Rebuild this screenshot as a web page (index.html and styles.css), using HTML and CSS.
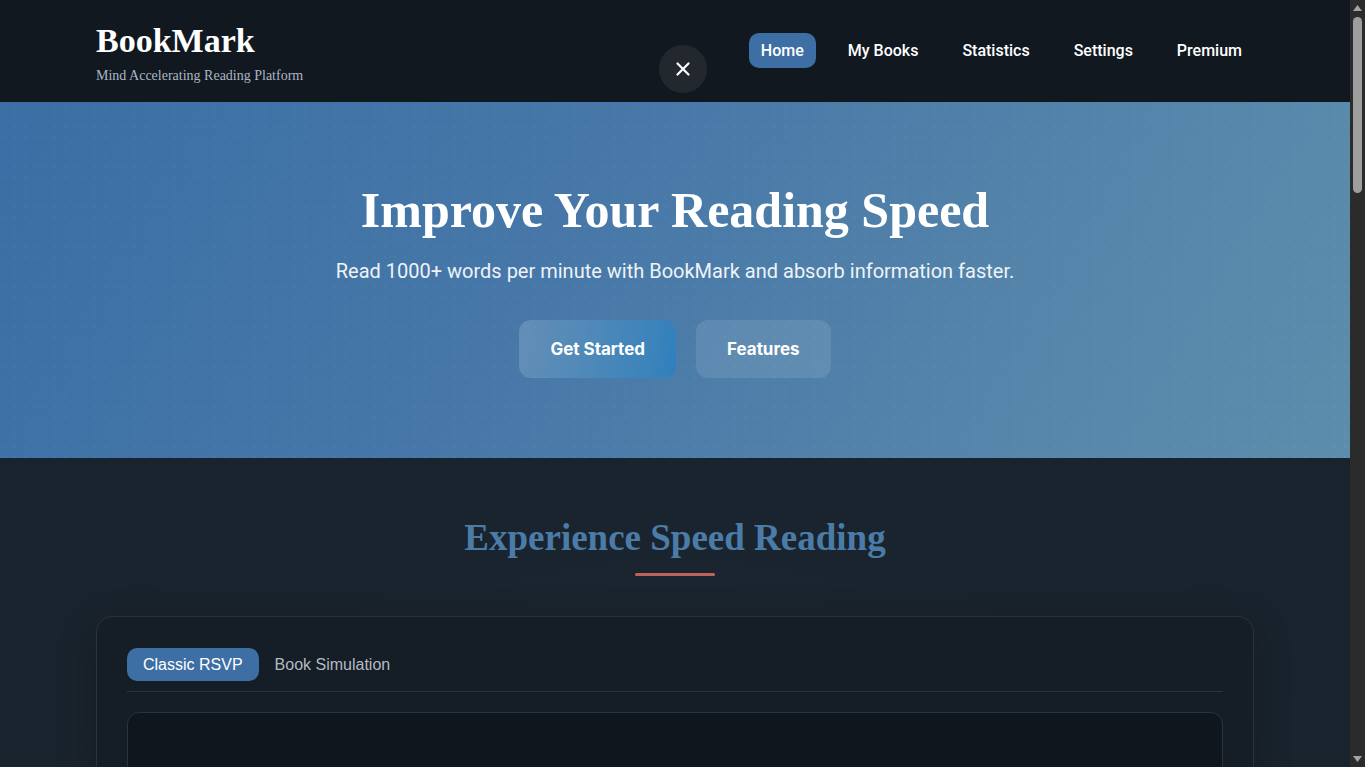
FILE: index.html
```html
<!DOCTYPE html>
<html lang="en">
<head>
<meta charset="utf-8">
<title>BookMark</title>
<link rel="stylesheet" href="styles.css">
</head>
<body>
<div class="page">
<header class="site-header">
  <div class="container header-inner">
    <div class="brand">
      <div class="logo">BookMark</div>
      <div class="tagline">Mind Accelerating Reading Platform</div>
    </div>
    <nav class="nav">
      <a class="nav-link active" href="#">Home</a>
      <a class="nav-link" href="#">My Books</a>
      <a class="nav-link" href="#">Statistics</a>
      <a class="nav-link" href="#">Settings</a>
      <a class="nav-link" href="#">Premium</a>
    </nav>
  </div>
  <button class="close-btn" aria-label="Close">
    <svg width="18" height="18" viewBox="0 0 18 18"><path d="M3.5 3.5L14.5 14.5M14.5 3.5L3.5 14.5" stroke="#fff" stroke-width="2.2" stroke-linecap="round"/></svg>
  </button>
</header>

<section class="hero">
  <h1 class="hero-title">Improve Your Reading Speed</h1>
  <p class="hero-sub">Read 1000+ words per minute with BookMark and absorb information faster.</p>
  <div class="hero-actions">
    <a class="btn btn-primary" href="#">Get Started</a>
    <a class="btn btn-ghost" href="#">Features</a>
  </div>
</section>

<section class="demo">
  <h2 class="section-title">Experience Speed Reading</h2>
  <div class="title-bar"></div>
  <div class="container">
    <div class="card">
      <div class="tabs">
        <button class="tab active">Classic RSVP</button>
        <button class="tab">Book Simulation</button>
      </div>
      <div class="reader"></div>
    </div>
  </div>
</section>
</div>
<div class="scrollbar" aria-hidden="true">
  <svg class="sb-arrow sb-up" width="9" height="6" viewBox="0 0 9 6"><path d="M4.5 0L9 6H0z" fill="#a3a3a3"/></svg>
  <div class="sb-thumb"></div>
  <svg class="sb-arrow sb-down" width="9" height="6" viewBox="0 0 9 6"><path d="M0 0H9L4.5 6z" fill="#a3a3a3"/></svg>
</div>
</body>
</html>
```
FILE: styles.css
```css
* { box-sizing: border-box; }
html, body { margin: 0; padding: 0; }
html { background: #2b2b2b; }
body {
  color: #fff;
  font-family: Roboto, "Liberation Sans", sans-serif;
}
.page {
  margin-right: 15px;
  background: #1b2631;
}
.scrollbar {
  position: fixed;
  top: 0;
  right: 0;
  width: 15px;
  height: 100vh;
  background: #2b2b2b;
}
.sb-arrow { position: absolute; left: 3px; }
.sb-up { top: 5px; }
.sb-down { bottom: 5px; }
.sb-thumb {
  position: absolute;
  left: 3px;
  top: 17px;
  width: 9px;
  height: 176px;
  border-radius: 5px;
  background: #9e9e9e;
}
.container {
  width: 1158px;
  margin: 0 auto;
}
.site-header {
  position: relative;
  background: #111820;
  height: 102px;
}
.header-inner {
  display: flex;
  justify-content: space-between;
  align-items: flex-start;
  height: 100%;
}
.brand { padding-top: 22px; }
.logo {
  font-family: "Liberation Serif", serif;
  font-weight: 700;
  font-size: 34px;
  line-height: 38px;
  color: #fff;
}
.tagline {
  font-family: "Liberation Serif", serif;
  font-size: 14px;
  color: #aab6c4;
  margin-top: 8px;
}
.nav {
  display: flex;
  gap: 20px;
  padding-top: 33px;
}
.nav-link {
  display: block;
  padding: 0 12px;
  height: 35px;
  line-height: 35px;
  border-radius: 10px;
  color: #fff;
  text-decoration: none;
  font-weight: 500;
  font-size: 16px;
}
.nav-link.active { background: #3d6fa5; }
.close-btn {
  position: absolute;
  left: 659px;
  top: 45px;
  width: 48px;
  height: 48px;
  border-radius: 50%;
  border: none;
  background: #23282f;
  display: flex;
  align-items: center;
  justify-content: center;
  padding: 0;
}
.hero {
  height: 356px;
  text-align: center;
  padding-top: 80px;
  background-color: #4a7aa8;
  background-image:
    radial-gradient(rgba(255,255,255,0.035) 1px, transparent 1.3px),
    linear-gradient(120deg, #3b6fa5 0%, #4677a8 40%, #5585aa 75%, #5d8dac 100%);
  background-size: 10px 10px, 100% 100%;
}
.hero-title {
  margin: 0;
  font-family: "Liberation Serif", serif;
  font-weight: 700;
  font-size: 50px;
  line-height: 56px;
  color: #fff;
}
.hero-sub {
  margin: 21px 0 0;
  font-size: 20px;
  line-height: 24px;
  color: #eef3f8;
}
.hero-actions {
  display: flex;
  justify-content: center;
  gap: 20px;
  margin-top: 37px;
}
.btn {
  display: block;
  height: 58px;
  line-height: 58px;
  padding: 0 31px;
  border-radius: 12px;
  color: #fff;
  text-decoration: none;
  font-family: Inter, sans-serif;
  font-weight: 700;
  font-size: 17px;
}
.btn-primary {
  background: linear-gradient(100deg, rgba(255,255,255,0.16) 0%, #3a83bb 85%, #2f7fbd 100%);
}
.btn-ghost {
  background: rgba(255,255,255,0.1);
}
.demo {
  padding-top: 58px;
  background: radial-gradient(ellipse at 50% 80%, #1c2833 0%, #1a242e 60%, #19232d 100%);
  padding-bottom: 80px;
}
.section-title {
  margin: 0;
  text-align: center;
  font-family: "Liberation Serif", serif;
  font-weight: 700;
  font-size: 37px;
  line-height: 44px;
  color: #4b7ca7;
}
.title-bar {
  width: 80px;
  height: 3px;
  background: #c0625c;
  margin: 13px auto 40px;
  border-radius: 2px;
}
.card {
  background: #151d26;
  border: 1px solid #29333e;
  border-radius: 16px;
  padding: 31px 30px 30px;
  box-shadow: 0 10px 40px rgba(0,0,0,0.2);
}
.tabs {
  display: flex;
  padding-bottom: 10px;
  border-bottom: 1px solid #2a333d;
}
.tab {
  border: none;
  background: transparent;
  color: #b3bac2;
  font-family: "Liberation Sans", Arial, sans-serif;
  font-size: 16px;
  height: 33px;
  padding: 0 16px;
  border-radius: 10px;
}
.tab.active { background: #3d6fa5; color: #fff; }
.reader {
  margin-top: 20px;
  height: 420px;
  border: 1px solid #29333e;
  border-radius: 12px;
  background: #10161d;
}
```
